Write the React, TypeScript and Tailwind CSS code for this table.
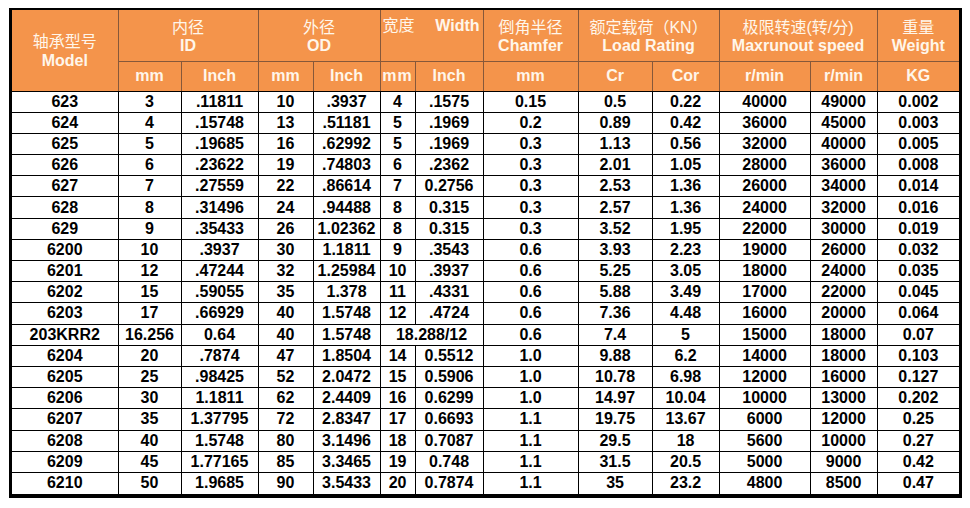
const rows: (string | number)[][] = [
  ["623", "3", ".11811", "10", ".3937", "4", ".1575", "0.15", "0.5", "0.22", "40000", "49000", "0.002"],
  ["624", "4", ".15748", "13", ".51181", "5", ".1969", "0.2", "0.89", "0.42", "36000", "45000", "0.003"],
  ["625", "5", ".19685", "16", ".62992", "5", ".1969", "0.3", "1.13", "0.56", "32000", "40000", "0.005"],
  ["626", "6", ".23622", "19", ".74803", "6", ".2362", "0.3", "2.01", "1.05", "28000", "36000", "0.008"],
  ["627", "7", ".27559", "22", ".86614", "7", "0.2756", "0.3", "2.53", "1.36", "26000", "34000", "0.014"],
  ["628", "8", ".31496", "24", ".94488", "8", "0.315", "0.3", "2.57", "1.36", "24000", "32000", "0.016"],
  ["629", "9", ".35433", "26", "1.02362", "8", "0.315", "0.3", "3.52", "1.95", "22000", "30000", "0.019"],
  ["6200", "10", ".3937", "30", "1.1811", "9", ".3543", "0.6", "3.93", "2.23", "19000", "26000", "0.032"],
  ["6201", "12", ".47244", "32", "1.25984", "10", ".3937", "0.6", "5.25", "3.05", "18000", "24000", "0.035"],
  ["6202", "15", ".59055", "35", "1.378", "11", ".4331", "0.6", "5.88", "3.49", "17000", "22000", "0.045"],
  ["6203", "17", ".66929", "40", "1.5748", "12", ".4724", "0.6", "7.36", "4.48", "16000", "20000", "0.064"],
  ["203KRR2", "16.256", "0.64", "40", "1.5748", "18.288/12", "0.6", "7.4", "5", "15000", "18000", "0.07"],
  ["6204", "20", ".7874", "47", "1.8504", "14", "0.5512", "1.0", "9.88", "6.2", "14000", "18000", "0.103"],
  ["6205", "25", ".98425", "52", "2.0472", "15", "0.5906", "1.0", "10.78", "6.98", "12000", "16000", "0.127"],
  ["6206", "30", "1.1811", "62", "2.4409", "16", "0.6299", "1.0", "14.97", "10.04", "10000", "13000", "0.202"],
  ["6207", "35", "1.37795", "72", "2.8347", "17", "0.6693", "1.1", "19.75", "13.67", "6000", "12000", "0.25"],
  ["6208", "40", "1.5748", "80", "3.1496", "18", "0.7087", "1.1", "29.5", "18", "5600", "10000", "0.27"],
  ["6209", "45", "1.77165", "85", "3.3465", "19", "0.748", "1.1", "31.5", "20.5", "5000", "9000", "0.42"],
  ["6210", "50", "1.9685", "90", "3.5433", "20", "0.7874", "1.1", "35", "23.2", "4800", "8500", "0.47"],
];

const colWidths = [106, 63, 77, 55, 67, 35, 68, 95, 74, 67, 91, 67, 82];

const subHeads = ["mm", "Inch", "mm", "Inch", "mm", "Inch", "mm", "Cr", "Cor", "r/min", "r/min", "KG"];

const groups = [
  { zh: "内径", en: "ID", span: 2 },
  { zh: "外径", en: "OD", span: 2 },
  { zh: "宽度", en: "Width", span: 2, inline: true },
  { zh: "倒角半径", en: "Chamfer", span: 1 },
  { zh: "额定载荷（KN）", en: "Load Rating", span: 2 },
  { zh: "极限转速(转/分)", en: "Maxrunout speed", span: 2 },
  { zh: "重量", en: "Weight", span: 1 },
];

function HeadCell({ zh, en, span, inline }: { zh: string; en: string; span: number; inline?: boolean }) {
  return (
    <th colSpan={span} className="h-[51px] border border-[#86583a] p-0 align-middle font-bold">
      {inline ? (
        <div className="flex h-full items-start justify-between pt-[6px] pr-[3px] pl-[2px] leading-[20px]">
          <span className="font-normal">{zh}</span>
          <span>{en}</span>
        </div>
      ) : (
        <div className="flex flex-col items-center">
          <span className="leading-[22px] font-normal">{zh}</span>
          <span className="leading-[14px]">{en}</span>
        </div>
      )}
    </th>
  );
}

export default function App() {
  return (
    <div className="min-h-[508px] w-[970px] bg-white pt-[8px] pl-[9px]">
      <div className="w-[953px] border-t-2 border-r-[3px] border-b-[4px] border-l-[3px] border-black">
        <table
          className="w-[947px] table-fixed border-collapse border-hidden text-[16px] font-bold"
          style={{ fontFamily: '"Liberation Sans", Arial, "Noto Sans CJK SC", sans-serif' }}
        >
          <colgroup>
            {colWidths.map((w, i) => (
              <col key={i} style={{ width: w }} />
            ))}
          </colgroup>
          <thead className="bg-[#f4944b] text-[#fff6ea]">
            <tr>
              <th rowSpan={2} className="border border-[#86583a] border-b-black p-0 align-middle">
                <div className="flex flex-col items-center pt-[1px] leading-[19px]">
                  <span className="font-normal">轴承型号</span>
                  <span>Model</span>
                </div>
              </th>
              {groups.map((g) => (
                <HeadCell key={g.en} {...g} />
              ))}
            </tr>
            <tr>
              {subHeads.map((s, i) => (
                <th
                  key={i}
                  className={`h-[30px] border border-[#86583a] border-b-black p-0 leading-none ${
                    i === 4 ? "tracking-[1px]" : ""
                  }`}
                >
                  {s}
                </th>
              ))}
            </tr>
          </thead>
          <tbody className="text-black">
            {rows.map((r, ri) => (
              <tr key={ri} className="h-[21.2px]">
                {r.map((c, ci) => (
                  <td
                    key={ci}
                    colSpan={r.length === 12 && ci === 5 ? 2 : 1}
                    className="border border-black p-0 text-center leading-[20px] whitespace-nowrap"
                  >
                    {c}
                  </td>
                ))}
              </tr>
            ))}
          </tbody>
        </table>
      </div>
    </div>
  );
}
